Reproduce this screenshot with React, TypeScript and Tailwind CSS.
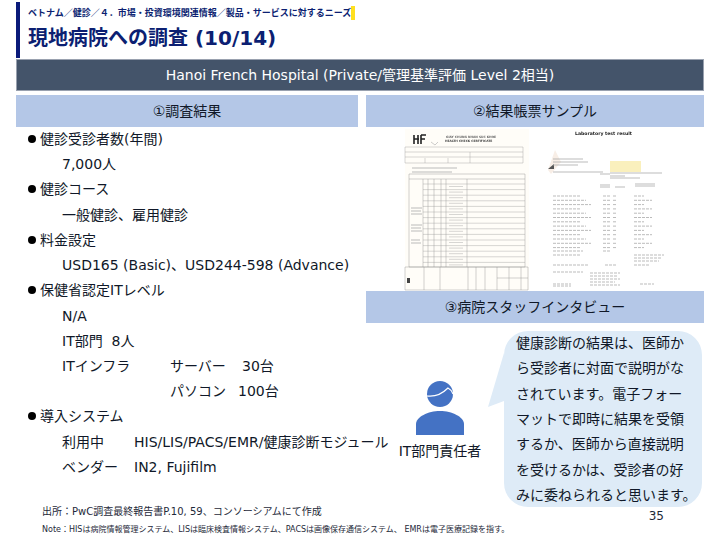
import type { ReactNode } from 'react';

const FONT = { fontFamily: '"DejaVu Sans", "Noto Sans CJK JP", sans-serif' };

const bubbleLines = [
    '健康診断の結果は、医師か',
    'ら受診者に対面で説明がな',
    'されています。電子フォー',
    'マットで即時に結果を受領',
    'するか、医師から直接説明',
    'を受けるかは、受診者の好',
    'みに委ねられると思います。',
];

const formRows = Array.from({ length: 15 }, (_, i) => 184 + i * 5.6);
const labRows = Array.from({ length: 13 }, (_, i) => 196 + i * 4.3);

function Band({ children }: { children: ReactNode }) {
    return <div className="flex h-8 shrink-0 items-center justify-center bg-[#b4c7e7] text-sm text-gray-900">{children}</div>;
}

function Bullet({ children }: { children: ReactNode }) {
    return (
        <div className="flex items-center gap-1 pl-3">
            <span className="h-2 w-2 rounded-full bg-black" />
            <span>{children}</span>
        </div>
    );
}

function Indent({ children }: { children: ReactNode }) {
    return <div className="flex pl-11.5">{children}</div>;
}

function Samples() {
    return (
        <svg viewBox="367 127 336 164" className="h-[164px] w-full shrink-0 blur-[0.4px]">
            {/* health check certificate */}
            <rect x="405" y="129" width="124" height="161" fill="#fffdf8" />
            <path d="M414 135v9M418 135v9M414 139h5M421 135v9M421 135h5M421 139h4" stroke="#222" strokeWidth="1.6" fill="none" />
            <path d="M431 142l4 3 3-3" stroke="#aaa" strokeWidth="0.6" fill="none" />
            <text x="446" y="138" fontSize="3" fontWeight="700" fill="#666">GIAY CHUNG NHAN SUC KHOE</text>
            <text x="445" y="142" fontSize="3" fontWeight="700" fill="#444">HEALTH CHECK CERTIFICATE</text>
            <path d="M405 147h118v16h-118zM405 152h118M405 157h118M470 152v11M425 163v-5M448 163v-5" stroke="#999" strokeWidth="0.4" fill="none" />
            <path d="M412 168h45M412 172h40" stroke="#aaa" strokeWidth="0.8" />
            <path d="M409 174h116v93h-116zM409 179h116M423 179v88M428 179v88M434 179v88M441 179v88M446 179v88M467 179v88" stroke="#888" strokeWidth="0.4" fill="none" />
            {formRows.map(y => (
                <path key={y} d={`M423 ${y}h102M449 ${y + 2.5}h14`} stroke="#999" strokeWidth="0.4" />
            ))}
            <path d="M411 208h11M411 211h10M411 214h11M411 225h11M411 228h10M411 231h11M411 240h9M411 243h10" stroke="#aaa" strokeWidth="0.8" />
            <path d="M405 267h123v23h-123zM424 267v23M440 267v23M468 267v23M476 267v23M485 267v23M497 267v23M509 267v23M521 267v23M497 278h31" stroke="#888" strokeWidth="0.4" fill="none" />
            <rect x="407" y="278" width="3" height="5" fill="#444" />
            {/* laboratory result */}
            <text x="575" y="135" fontSize="4.6" fontWeight="700" fill="#222">Laboratory test result</text>
            <path d="M548 170l7-20 6 12-10 12z" fill="#f8eee6" />
            <path d="M548 169l6-5v5z" fill="#555" />
            <rect x="610" y="161" width="31" height="11" fill="#faf0bd" />
            <path d="M553 159h30M553 162h35M553 165h25M553 172h50M600 174h10M610 173h52M610 176h15M610 178h30M600 185h10M600 187h10M615 187h10M635 184h20M635 186h20" stroke="#aaa" strokeWidth="0.8" />
            {labRows.map((y, i) => (
                <path key={y} d={`M553 ${y}h${28 + (i % 3) * 5}M603 ${y}h8M613 ${y}h4M634 ${y}h${10 + (i % 2) * 8}`} stroke="#aaa" strokeWidth="0.8" strokeDasharray="3 1" />
            ))}
            <path d="M553 251h30M603 251h8M553 255h28M634 255h30M634 258h28M634 261h25M553 265h35M605 265h12M634 265h15M553 272h30M590 273h30M590 276h28M590 279h30M590 282h25M590 285h30M553 284h18M553 286h18M640 284h14" stroke="#aaa" strokeWidth="0.8" strokeDasharray="3 1" />
        </svg>
    );
}

function Person() {
    return (
        <svg viewBox="0 0 48 56" className="h-14 w-12" fill="#4472c4">
            <circle cx="24" cy="15" r="13" />
            <path d="M11 17c8 1 15-2 21-8 2 1 4 3 5 6" fill="none" stroke="#fff" strokeWidth="1.2" />
            <path d="M0 56V45c0-7 12-13 24-13s24 6 24 13v11z" />
        </svg>
    );
}

export default function App() {
    return (
        <div className="flex h-[540px] w-[720px] flex-col overflow-hidden bg-white text-sm text-gray-900" style={FONT}>
            <header className="mx-4 mt-0.5 flex h-14 flex-col border-l-4 border-[#0a1a7a] pl-2 text-[#0c1f72]">
                <div className="mt-1 w-fit border-r-4 border-yellow-300 text-[9px] leading-3.5 font-bold">
                    ベトナム／健診／４．市場・投資環境関連情報／製品・サービスに対するニーズ
                </div>
                <h1 className="mt-1 text-xl leading-7 font-bold">現地病院への調査 (10/14)</h1>
            </header>

            <div className="mx-4 mt-px flex h-8 items-center justify-center border border-gray-400 bg-[#44546a] text-white">
                Hanoi French Hospital (Private/管理基準評価 Level 2相当)
            </div>

            <main className="mx-4 mt-1 flex h-[405px] gap-2">
                <section className="flex w-[342px] shrink-0 flex-col">
                    <Band>①調査結果</Band>
                    <div className="flex h-88 flex-col justify-between leading-6 whitespace-nowrap">
                        <Bullet>健診受診者数(年間)</Bullet>
                        <Indent>7,000人</Indent>
                        <Bullet>健診コース</Bullet>
                        <Indent>一般健診、雇用健診</Indent>
                        <Bullet>料金設定</Bullet>
                        <Indent>USD165 (Basic)、USD244-598 (Advance)</Indent>
                        <Bullet>保健省認定ITレベル</Bullet>
                        <Indent>N/A</Indent>
                        <Indent>IT部門&nbsp;&nbsp;8人</Indent>
                        <Indent>
                            <span className="w-27 shrink-0">ITインフラ</span>
                            <span className="w-18 shrink-0">サーバー</span>
                            <span>30台</span>
                        </Indent>
                        <Indent>
                            <span className="w-27 shrink-0" />
                            <span className="w-16 shrink-0">パソコン</span>
                            <span className="pl-1">100台</span>
                        </Indent>
                        <Bullet>導入システム</Bullet>
                        <Indent>
                            <span className="w-18 shrink-0">利用中</span>
                            <span>HIS/LIS/PACS/EMR/健康診断モジュール</span>
                        </Indent>
                        <Indent>
                            <span className="w-18 shrink-0">ベンダー</span>
                            <span>IN2, Fujifilm</span>
                        </Indent>
                    </div>
                </section>

                <section className="flex min-w-0 flex-1 flex-col">
                    <Band>②結果帳票サンプル</Band>
                    <Samples />
                    <Band>③病院スタッフインタビュー</Band>
                    <div className="flex flex-1 pt-2 pr-0.5">
                        <div className="mt-12 ml-8 flex w-21 flex-col items-center leading-6">
                            <Person />
                            <span className="mt-1 whitespace-nowrap">IT部門責任者</span>
                        </div>
                        <div className="relative ml-auto flex h-44 w-49.5 flex-col justify-between rounded-3xl bg-[#deebf7] pl-3 leading-6 whitespace-nowrap">
                            <svg viewBox="0 0 16 56" className="absolute top-5 -left-4 h-14 w-4" fill="#deebf7">
                                <path d="M16 2v48L0 56z" />
                            </svg>
                            {bubbleLines.map(line => (
                                <div key={line}>{line}</div>
                            ))}
                        </div>
                    </div>
                </section>
            </main>

            <footer className="relative mx-4 flex flex-1 flex-col pt-1 pl-6.5 text-[10px] leading-4 text-gray-800">
                <span>出所：PwC調査最終報告書P.10, 59、コンソーシアムにて作成</span>
                <span className="mt-1 text-[8px] leading-3">Note：HISは病院情報管理システム、LISは臨床検査情報システム、PACSは画像保存通信システム、 EMRは電子医療記録を指す。</span>
                <span className="absolute top-2 right-10 text-xs">35</span>
            </footer>
        </div>
    );
}
